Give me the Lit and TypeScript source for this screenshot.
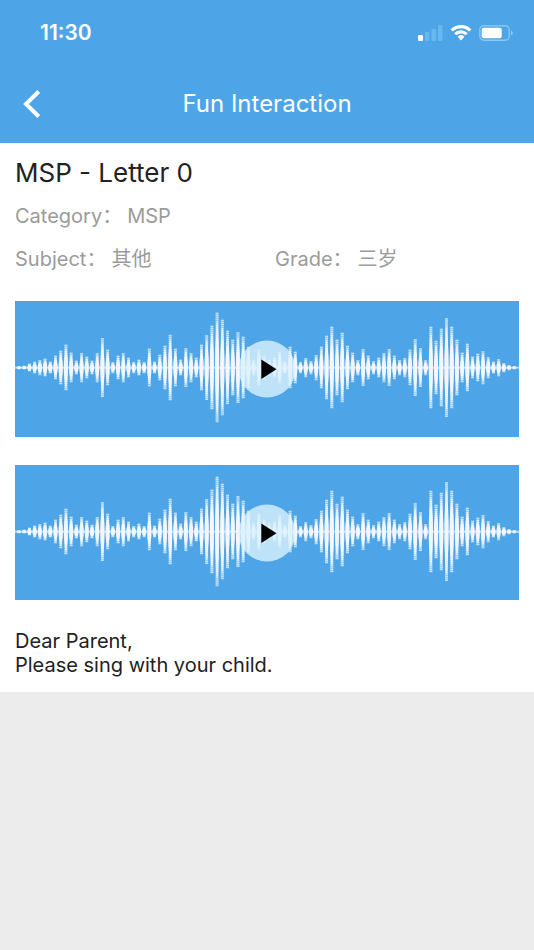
import { LitElement, html, svg, css } from "lit";
import { customElement, property } from "lit/decorators.js";

const LEVELS = [
  1.5, 2, 4, 6, 7.5, 9, 6, 12, 17, 23, 15, 7, 14.5, 11, 7, 14.5, 29.5, 18, 5.5, 12, 14.5, 10, 5.5, 8,
  5.5, 19, 6, 13, 22, 33, 19, 8, 19.5, 14.5, 10, 23, 32.5, 42, 55, 48, 37, 28, 35.5, 31, 21, 8, 18, 12,
  8, 10, 16, 6, 21, 16, 5.5, 9.5, 6.5, 12.5, 21, 32, 41, 28, 35, 22, 15, 7.5, 18.5, 12, 6.5, 10, 14.5, 18.5,
  12, 7.5, 9.5, 18, 28.5, 19.5, 7.5, 41, 27, 39, 49.5, 41, 28, 15, 24, 11, 14, 16.5, 10.5, 6, 8.5, 4.5, 2.5, 1.5,
];
const STEP = 5.224;
const MIDDLE = 66.8;

@customElement("audio-clip")
export class AudioClip extends LitElement {
  @property() label = "";

  static styles = css`
    :host { display: block; }
    .clip {
      display: grid;
      place-items: center;
      width: 100%;
      padding: 0;
      border: 0;
      background: #4da5e7;
      cursor: pointer;
    }
    .wave, .play { grid-area: 1 / 1; display: block; }
    .wave { width: 100%; height: auto; }
    .play { width: 58px; height: 58px; }
  `;

  render() {
    return html`
      <button class="clip" type="button" aria-label=${this.label}>
        <svg class="wave" viewBox="0 0 505 136" aria-hidden="true">
          <rect y="65.8" width="505" height="2" fill="#fff" opacity=".6" />
          ${LEVELS.map((h, i) => {
            const x = 4 + i * STEP;
            return svg`
              <line x1=${x} x2=${x} y1=${MIDDLE - h} y2=${MIDDLE + h}
                stroke="#b5dcf8" stroke-opacity=".5" stroke-width="3" />
              <line x1=${x} x2=${x} y1=${MIDDLE - h} y2=${MIDDLE + h}
                stroke="#d8eefc" stroke-opacity=".75" stroke-width="3" stroke-dasharray="1.3 .7" />
              <ellipse cx=${x} cy=${MIDDLE} rx="1.9" ry=${h * 0.85} fill="#f6f8ff" opacity=".75" />
              <ellipse cx=${x} cy=${MIDDLE} rx="2.2" ry=${h * 0.6} fill="#f8f8ff" opacity=".8" />`;
          })}
        </svg>
        <svg class="play" viewBox="0 0 58 58" aria-hidden="true">
          <circle cx="29" cy="29" r="28.500" fill="#dbf1fc" opacity=".8" />
          <path d="M23.300 19.500v19.500l15.200-9.750z" fill="#000" />
        </svg>
      </button>
    `;
  }
}

@customElement("app-root")
export class AppRoot extends LitElement {
  static styles = css`
    :host {
      display: block;
      min-height: 100vh;
      background: #ececec;
      color: #222;
      font-family: Inter, "Noto Sans CJK SC", sans-serif;
    }
    .top { background: #4da5e7; color: #fff; }
    .status {
      display: flex;
      align-items: center;
      justify-content: space-between;
      height: 64px;
      padding: 2px 20px 0 40px;
      box-sizing: border-box;
    }
    .time { font-size: 21px; line-height: 24px; font-weight: 600; }
    .signals { display: flex; align-items: center; gap: 7px; }
    .signals svg { display: block; }
    .nav {
      display: grid;
      grid-template-columns: 48px 1fr 48px;
      align-items: center;
      height: 79px;
      padding: 0 8px;
    }
    .back {
      display: grid;
      place-items: center;
      height: 48px;
      padding: 0;
      border: 0;
      background: none;
      cursor: pointer;
    }
    .heading { margin: 0; font-size: 24px; line-height: 32px; font-weight: 400; text-align: center; }
    .card { padding: 12px 15px; background: #fff; }
    .title { margin: 0; font-size: 26px; line-height: 36px; font-weight: 400; }
    .facts {
      display: grid;
      grid-template-columns: 260px 1fr;
      row-gap: 15px;
      margin: 11px 0 28px;
      font-size: 20px;
      line-height: 28px;
      color: #9b9b9b;
    }
    .fact { display: flex; }
    .wide { grid-column: 1 / -1; }
    .fact dd { margin: 0 0 0 5px; }
    .clips { display: grid; gap: 28px; }
    .note { margin: 29px 0 3px; font-size: 20px; line-height: 24px; }
  `;

  render() {
    return html`
      <header class="top">
        <div class="status">
          <span class="time">11:30</span>
          <div class="signals">
            <svg width="25" height="16" viewBox="0 0 25 16" fill="#fff" aria-hidden="true">
              <rect y="10" width="5" height="6" rx="1.300" />
              <g fill="#66b8ee">
                <rect x="7" y="7" width="4.500" height="9" rx="1" />
                <rect x="13.500" y="4" width="4.500" height="12" rx="1" />
                <rect x="20" y="0" width="4.500" height="16" rx="1" />
              </g>
            </svg>
            <svg width="22" height="16" viewBox="0 0 22 16" fill="#fff" aria-hidden="true">
              <path d="M11 3.200c3 0 5.800 1.200 7.900 3.100.2.200.4.200.6 0l1.500-1.600c.2-.2.200-.4 0-.6C18.300 1.500 14.800 0 11 0S3.700 1.500 1 4.100c-.2.200-.2.400 0 .6l1.500 1.600c.2.200.4.200.6 0C5.200 4.400 8 3.200 11 3.200z" />
              <path d="M11 8.400c1.700 0 3.200.6 4.400 1.700.2.200.4.200.6 0l1.500-1.600c.2-.2.200-.4 0-.6A9.600 9.600 0 0 0 11 5.300c-2.500 0-4.800 1-6.500 2.600-.2.200-.2.400 0 .6L6 10.100c.2.200.4.200.6 0A6.500 6.500 0 0 1 11 8.400z" />
              <path d="M14.100 12c.2-.2.200-.4 0-.6a4.700 4.700 0 0 0-6.200 0c-.2.200-.2.400 0 .6l2.800 3.200c.2.200.4.200.6 0z" />
            </svg>
            <svg width="35" height="16" viewBox="0 0 35 16" aria-hidden="true">
              <rect x=".8" y=".8" width="29.400" height="14.400" rx="4" fill="none" stroke="#86c8f1" stroke-width="1.400" />
              <rect x="2.700" y="2.800" width="20" height="10.400" rx="2" fill="#fff" />
              <path d="M32 5.500v5c1.200-.4 1.900-1.400 1.900-2.500S33.200 5.900 32 5.500z" fill="#86c8f1" />
            </svg>
          </div>
        </div>
        <nav class="nav">
          <button class="back" type="button" aria-label="Back">
            <svg width="18" height="28" viewBox="0 0 18 28" fill="none" stroke="#fff" stroke-width="4" aria-hidden="true">
              <path d="M15.700 1.500 3 14l12.700 12.500" />
            </svg>
          </button>
          <h1 class="heading">Fun Interaction</h1>
        </nav>
      </header>
      <main class="card">
        <h2 class="title">MSP - Letter 0</h2>
        <dl class="facts">
          <div class="fact wide"><dt>Category：</dt><dd>MSP</dd></div>
          <div class="fact"><dt>Subject：</dt><dd>其他</dd></div>
          <div class="fact"><dt>Grade：</dt><dd>三岁</dd></div>
        </dl>
        <div class="clips">
          <audio-clip label="Play recording 1"></audio-clip>
          <audio-clip label="Play recording 2"></audio-clip>
        </div>
        <p class="note">Dear Parent,<br />Please sing with your child.</p>
      </main>
    `;
  }
}
